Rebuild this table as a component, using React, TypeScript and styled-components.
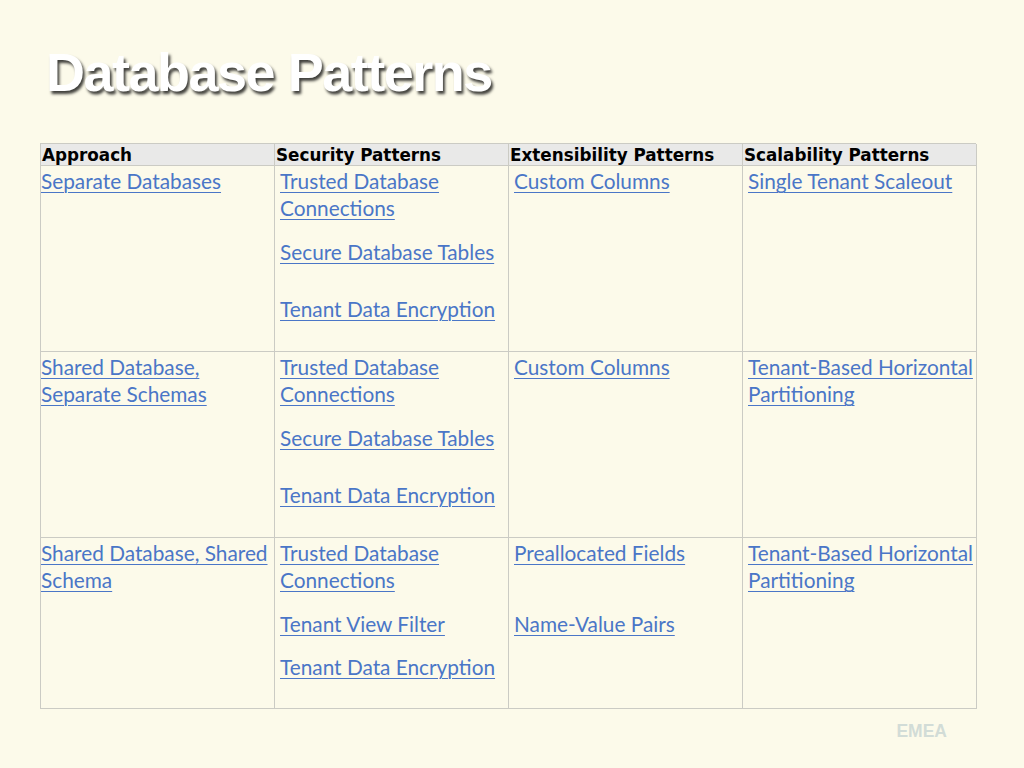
import React from "react";
import styled, { createGlobalStyle } from "styled-components";

const Global = createGlobalStyle`
  html, body { margin: 0; padding: 0; background: #fcfaea; }
  body { width: 1024px; height: 768px; overflow: hidden; }
`;

const Slide = styled.div`
  width: 1024px;
  height: 768px;
  box-sizing: border-box;
  padding: 44px 48px 0 40px;
  display: flex;
  flex-direction: column;
  background: #fcfaea;
`;

const Title = styled.h1`
  margin: 0 0 0 6px;
  height: 56px;
  line-height: 56px;
  font-family: "Liberation Sans", Arial, sans-serif;
  font-weight: bold;
  font-size: 54px;
  letter-spacing: -1.5px;
  color: #ffffff;
  text-shadow: 2px 3px 3px rgba(0, 0, 0, 0.75);
`;

const Grid = styled.div`
  margin-top: 43px;
  width: 936px;
  display: grid;
  grid-template-columns: 234px 234px 234px 234px;
  border-left: 1px solid #cbcbc4;
  border-top: 1px solid #cbcbc4;
  box-sizing: border-box;
`;

const HeadCell = styled.div`
  height: 22px;
  box-sizing: border-box;
  padding: 0 0 0 1px;
  background: #e9e9e8;
  border-right: 1px solid #cbcbc4;
  border-bottom: 1px solid #cbcbc4;
  font-family: "DejaVu Sans", Verdana, sans-serif;
  font-weight: bold;
  font-size: 16.8px;
  line-height: 22px;
  color: #000;
  white-space: nowrap;
  overflow: hidden;
`;

const Cell = styled.div<{ $h: number; $pad: number }>`
  height: ${(p) => p.$h}px;
  box-sizing: border-box;
  padding: 1px 0 0 ${(p) => p.$pad}px;
  border-right: 1px solid #cbcbc4;
  border-bottom: 1px solid #cbcbc4;
  display: flex;
  flex-direction: column;
  align-items: flex-start;
`;

const Link = styled.a<{ $gap: number }>`
  display: block;
  margin-top: ${(p) => p.$gap}px;
  font-family: "Lato", "Open Sans", sans-serif;
  font-size: 20.8px;
  line-height: 27px;
  color: #4a76c7;
  text-decoration: underline;
  text-decoration-thickness: 1px;
  text-underline-offset: 3px;
  white-space: normal;
  cursor: pointer;
`;

const Footer = styled.div`
  margin-top: 12px;
  width: 936px;
  display: flex;
  justify-content: flex-end;
  padding-right: 29px;
  box-sizing: border-box;
  font-family: "Liberation Sans", Arial, sans-serif;
  font-weight: bold;
  font-size: 17.5px;
  color: #d2dcd7;
`;

type Item = { text: string; gap?: number };
type Row = { h: number; cells: Item[][] };

const headers = ["Approach", "Security Patterns", "Extensibility Patterns", "Scalability Patterns"];

const rows: Row[] = [
  {
    h: 186,
    cells: [
      [{ text: "Separate Databases" }],
      [
        { text: "Trusted Database Connections" },
        { text: "Secure Database Tables", gap: 17 },
        { text: "Tenant Data Encryption", gap: 30 },
      ],
      [{ text: "Custom Columns" }],
      [{ text: "Single Tenant Scaleout" }],
    ],
  },
  {
    h: 186,
    cells: [
      [{ text: "Shared Database, Separate Schemas" }],
      [
        { text: "Trusted Database Connections" },
        { text: "Secure Database Tables", gap: 17 },
        { text: "Tenant Data Encryption", gap: 30 },
      ],
      [{ text: "Custom Columns" }],
      [{ text: "Tenant-Based Horizontal Partitioning" }],
    ],
  },
  {
    h: 171,
    cells: [
      [{ text: "Shared Database, Shared Schema" }],
      [
        { text: "Trusted Database Connections" },
        { text: "Tenant View Filter", gap: 17 },
        { text: "Tenant Data Encryption", gap: 16 },
      ],
      [{ text: "Preallocated Fields" }, { text: "Name-Value Pairs", gap: 44 }],
      [{ text: "Tenant-Based Horizontal Partitioning" }],
    ],
  },
];

export default function App() {
  return (
    <>
      <Global />
      <Slide>
        <Title>Database Patterns</Title>
        <Grid>
          {headers.map((h) => (
            <HeadCell key={h}>{h}</HeadCell>
          ))}
          {rows.map((r, ri) =>
            r.cells.map((items, ci) => (
              <Cell key={`${ri}-${ci}`} $h={r.h} $pad={ci === 0 ? 0 : 5}>
                {items.map((it) => (
                  <Link key={it.text} $gap={it.gap ?? 0}>
                    {it.text}
                  </Link>
                ))}
              </Cell>
            ))
          )}
        </Grid>
        <Footer>EMEA</Footer>
      </Slide>
    </>
  );
}
